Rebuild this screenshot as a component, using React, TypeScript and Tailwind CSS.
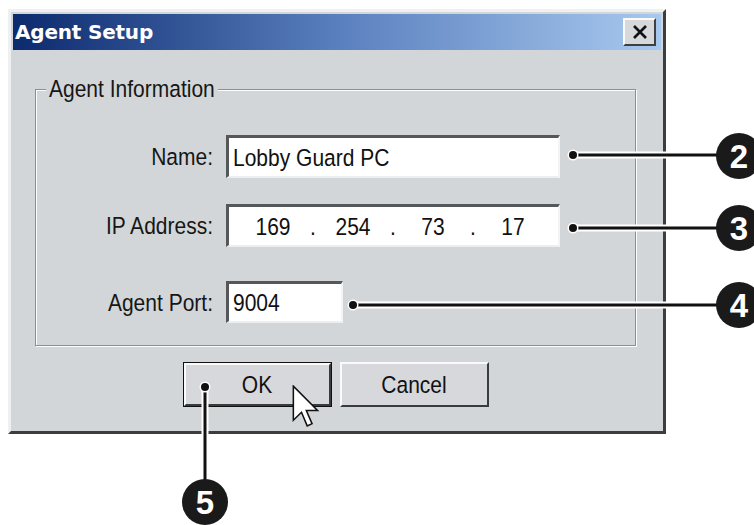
import React from "react";

const tall = "scale-y-[1.14]";
const label = `text-[21px] leading-none text-[#161616] text-right ${tall}`;
const sunken =
  "bg-white border-t-[3px] border-l-[3px] border-r-2 border-b-2 border-t-[#55585b] border-l-[#55585b] border-r-[#f3f4f5] border-b-[#eceef0] flex items-center";

function Callouts() {
  const lines = [
    { x1: 573, y1: 155, x2: 720, y2: 155 },
    { x1: 573, y1: 228, x2: 720, y2: 228 },
    { x1: 353, y1: 305, x2: 720, y2: 305 },
    { x1: 205, y1: 387, x2: 205, y2: 482 },
  ];
  const badges = [
    { cx: 739, cy: 156, n: "2" },
    { cx: 739, cy: 228, n: "3" },
    { cx: 739, cy: 305, n: "4" },
    { cx: 205, cy: 502, n: "5" },
  ];
  return (
    <svg className="absolute inset-0 pointer-events-none" width={754} height={525}>
      {lines.map((l, i) => (
        <g key={i}>
          <line {...l} stroke="#fff" strokeWidth={7} />
          <line {...l} stroke="#111" strokeWidth={3} />
          <circle cx={l.x1} cy={l.y1} r={5.5} fill="#fff" />
          <circle cx={l.x1} cy={l.y1} r={4} fill="#111" />
        </g>
      ))}
      {badges.map((b) => (
        <g key={b.n}>
          <circle cx={b.cx} cy={b.cy} r={23} fill="#1a1a1a" />
          <text
            x={b.cx}
            y={b.cy + 12}
            textAnchor="middle"
            fill="#fff"
            fontSize={33}
            fontWeight={700}
            fontFamily="'Liberation Sans', Arial, sans-serif"
          >
            {b.n}
          </text>
        </g>
      ))}
    </svg>
  );
}

function Cursor() {
  return (
    <svg className="absolute left-[292px] top-[385px]" width={28} height={44} viewBox="0 0 12.5 20">
      <path
        d="M0.5 0.5 L0.5 16 L4.2 12.4 L6.8 18.6 L9 17.6 L6.4 11.6 L11.5 11.6 Z"
        fill="#fff"
        stroke="#111"
        strokeWidth={0.7}
        strokeLinejoin="miter"
      />
    </svg>
  );
}

export default function App() {
  return (
    <div className="relative w-[754px] h-[525px] bg-white overflow-hidden font-['Liberation_Sans',Arial,sans-serif]">
      {/* window */}
      <div className="ml-[8px] mt-[9px] w-[658px] h-[425px] flex flex-col bg-[#d3d6d9] p-[2px] border-[3px] border-t-[#eef0f2] border-l-[#eef0f2] border-r-[#3c3d3f] border-b-[#3c3d3f]">
        {/* title bar */}
        <div className="h-[36px] flex items-center justify-between bg-linear-to-r from-[#0c2a6e] via-[#5a7fbe] to-[#a8c9ee] pl-[2px] pr-[5px]">
          <span className="text-white text-[20px] font-bold font-['DejaVu_Sans',sans-serif] tracking-[-0.2px]">
            Agent Setup
          </span>
          <div className="w-[33px] h-[28px] flex items-center justify-center bg-[#d6d8db] border-2 border-t-[#fbfbfb] border-l-[#fbfbfb] border-r-[#3e3f41] border-b-[#3e3f41]">
            <svg width={16} height={14} viewBox="0 0 16 14">
              <path d="M2 1 L14 13 M14 1 L2 13" stroke="#111" strokeWidth={2.6} />
            </svg>
          </div>
        </div>

        {/* body */}
        <div className="flex-1 flex flex-col px-[22px]">
          {/* group box */}
          <div className="relative mt-[39px] w-[601px] h-[257px] border border-[#8b8f94] shadow-[inset_1px_1px_0_#fbfcfd,1px_1px_0_#fbfcfd] flex flex-col pt-[45px]">
            <span className={`absolute left-[10px] -top-[12px] px-[3px] bg-[#d3d6d9] text-[21px] leading-none text-[#161616] ${tall}`}>
              Agent Information
            </span>

            <div className="flex items-center gap-[13px]">
              <div className={`${label} w-[177px]`}>Name:</div>
              <div className={`${sunken} w-[334px] h-[43px] pl-[4px]`}>
                <span className={`text-[21px] leading-none text-[#111] ${tall}`}>Lobby Guard PC</span>
              </div>
            </div>

            <div className="flex items-center gap-[13px] mt-[26px]">
              <div className={`${label} w-[177px]`}>IP Address:</div>
              <div className={`${sunken} w-[334px] h-[43px] pl-[9px] text-[21px] leading-none text-[#111]`}>
                <span className={`w-[70px] text-center ${tall}`}>169</span>
                <span className={`w-[10px] text-center ${tall}`}>.</span>
                <span className={`w-[70px] text-center ${tall}`}>254</span>
                <span className={`w-[10px] text-center ${tall}`}>.</span>
                <span className={`w-[70px] text-center ${tall}`}>73</span>
                <span className={`w-[10px] text-center ${tall}`}>.</span>
                <span className={`w-[70px] text-center ${tall}`}>17</span>
              </div>
            </div>

            <div className="flex items-center gap-[13px] mt-[34px]">
              <div className={`${label} w-[177px]`}>Agent Port:</div>
              <div className={`${sunken} w-[117px] h-[42px] pl-[4px]`}>
                <span className={`text-[21px] leading-none text-[#111] ${tall}`}>9004</span>
              </div>
            </div>
          </div>

          {/* buttons */}
          <div className="flex justify-center gap-[8px] mt-[16px] pr-[3px]">
            <div className="w-[149px] h-[45px] border border-[#111] flex">
              <div className="flex-1 flex items-center justify-center border-2 border-t-[#fafafa] border-l-[#fafafa] border-r-[#3a3b3d] border-b-[#3a3b3d] bg-[#d6d8db] text-[21px] leading-none text-[#111]">
                <span className={tall}>OK</span>
              </div>
            </div>
            <div className="w-[149px] h-[45px] flex items-center justify-center border-2 border-t-[#fafafa] border-l-[#fafafa] border-r-[#3a3b3d] border-b-[#3a3b3d] bg-[#d6d8db] text-[21px] leading-none text-[#111]">
              <span className={tall}>Cancel</span>
            </div>
          </div>
        </div>
      </div>

      <Callouts />
      <Cursor />
    </div>
  );
}
